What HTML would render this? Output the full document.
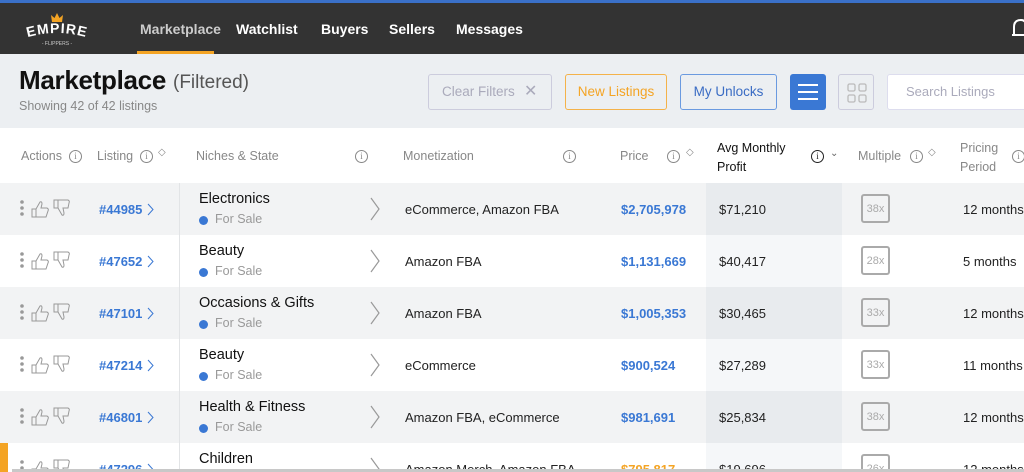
<!DOCTYPE html>
<html style="width:1024px;height:472px;overflow:hidden"><head><meta charset="utf-8"><style>
*{margin:0;padding:0;box-sizing:border-box}
body{width:1024px;height:472px;overflow:hidden;font-family:"Liberation Sans",sans-serif;background:#fff;position:relative}
.a{position:absolute;white-space:nowrap}
.nav{font-size:14px;font-weight:bold;color:#fff;top:21px}
.hd{font-size:12.5px;color:#888;}
.ic{width:13px;height:13px;border:1px solid #888;border-radius:50%;font-size:9px;line-height:11px;text-align:center;color:#888;font-family:"Liberation Serif",serif}
.btn{border:1px solid;border-radius:3px;font-size:13.5px;text-align:center;line-height:34px;height:36px;top:74px}
.row{position:absolute;left:0;width:1024px;height:52px;overflow:hidden}
.g{background:#f2f3f4}
.nm{font-size:14.5px;color:#111}
.fs{font-size:12.5px;color:#999}
.dot{width:9px;height:9px;border-radius:50%;background:#3a78d4}
.t{font-size:13px;color:#222}
.lk{font-size:13px;color:#3a78d4;font-weight:bold}
.mx{width:29px;height:29px;border:2px solid #aaa;border-radius:3px;font-size:11px;color:#aaa;display:flex;align-items:center;justify-content:center}
</style></head><body>
<div class="a" style="left:0;top:0;width:1024px;height:3px;background:#3a70c8"></div>
<div class="a" style="left:0;top:3px;width:1024px;height:51px;background:#333"></div>
<svg class="a" style="left:22px;top:11px" width="70" height="36">
<path d="M30 11 L29 4 L32.5 7 L35 2 L37.5 7 L41 4 L40 11 Z" fill="#f4a424"/>
<defs><path id="arc" d="M3 27 Q35 17 67 27"/></defs>
<text font-family="Liberation Sans" font-weight="bold" font-size="14" fill="#fff" letter-spacing="1"><textPath href="#arc" startOffset="50%" text-anchor="middle">EMPIRE</textPath></text>
<text x="35" y="34" text-anchor="middle" font-family="Liberation Sans" font-size="5" fill="#ccc">- FLIPPERS -</text>
</svg>
<div class="a nav" style="left:140px;color:#ccc">Marketplace</div>
<div class="a" style="left:137px;top:51px;width:77px;height:3px;background:#f4a424"></div>
<div class="a nav" style="left:236px">Watchlist</div>
<div class="a nav" style="left:321px">Buyers</div>
<div class="a nav" style="left:389px">Sellers</div>
<div class="a nav" style="left:456px">Messages</div>
<svg class="a" style="left:1012px;top:18px" width="14" height="20"><path d="M2 17 L2 9 Q2 2 9 2 Q14 2 14 8" stroke="#fff" stroke-width="2" fill="none"/><path d="M0 17 H14" stroke="#fff" stroke-width="2"/></svg>
<div class="a" style="left:0;top:54px;width:1024px;height:74px;background:#eceff2"></div>
<div class="a" style="left:19px;top:65px;font-size:26px;font-weight:bold;color:#111;letter-spacing:-0.3px">Marketplace</div>
<div class="a" style="left:173px;top:72px;font-size:19px;color:#555">(Filtered)</div>
<div class="a" style="left:19px;top:99px;font-size:12.5px;color:#888">Showing 42 of 42 listings</div>
<div class="a btn" style="left:428px;width:124px;border-color:#ccd;color:#aab;text-align:left;padding-left:13px">Clear Filters <span style="position:absolute;left:95px;top:0;font-size:16px;color:#aab">✕</span></div>
<div class="a btn" style="left:565px;width:102px;border-color:#f4b24a;color:#f4a424">New Listings</div>
<div class="a btn" style="left:680px;width:97px;border-color:#6a9ae0;color:#3a6cc4">My Unlocks</div>
<div class="a" style="left:790px;top:74px;width:36px;height:36px;background:#3a78d4;border-radius:3px"><div class="a" style="left:8px;top:10px;width:20px;height:2px;background:#fff;box-shadow:0 7px 0 #fff,0 14px 0 #fff"></div></div>
<div class="a" style="left:838px;top:74px;width:36px;height:36px;border:1px solid #ccd;border-radius:3px">
<svg class="a" style="left:8px;top:8px" width="20" height="20"><rect x="1" y="1" width="7" height="7" rx="1.5" fill="none" stroke="#bbb" stroke-width="1.3"/><rect x="12" y="1" width="7" height="7" rx="1.5" fill="none" stroke="#bbb" stroke-width="1.3"/><rect x="1" y="12" width="7" height="7" rx="1.5" fill="none" stroke="#bbb" stroke-width="1.3"/><rect x="12" y="12" width="7" height="7" rx="1.5" fill="none" stroke="#bbb" stroke-width="1.3"/></svg></div>
<div class="a" style="left:887px;top:74px;width:140px;height:36px;background:#fff;border:1px solid #dde;border-radius:3px;font-size:13px;color:#aab;line-height:34px;padding-left:18px">Search Listings</div>

<div class="a hd" style="left:21px;top:149px">Actions</div><div class="a ic" style="left:69px;top:150px">i</div>
<div class="a hd" style="left:97px;top:149px">Listing</div><div class="a ic" style="left:140px;top:150px">i</div><div class="a hd" style="left:158px;top:147px;font-size:10px">◇</div>
<div class="a hd" style="left:196px;top:149px">Niches &amp; State</div><div class="a ic" style="left:355px;top:150px">i</div>
<div class="a hd" style="left:403px;top:149px">Monetization</div><div class="a ic" style="left:563px;top:150px">i</div>
<div class="a hd" style="left:620px;top:149px">Price</div><div class="a ic" style="left:667px;top:150px">i</div><div class="a hd" style="left:686px;top:147px;font-size:10px">◇</div>
<div class="a" style="left:717px;top:139px;font-size:12.5px;color:#111;line-height:19px">Avg Monthly<br>Profit</div><div class="a ic" style="left:811px;top:150px;border-color:#222;color:#222">i</div><div class="a" style="left:830px;top:148px;font-size:10px;color:#666">⌄</div>
<div class="a hd" style="left:858px;top:149px">Multiple</div><div class="a ic" style="left:910px;top:150px">i</div><div class="a hd" style="left:928px;top:147px;font-size:10px">◇</div>
<div class="a hd" style="left:960px;top:139px;line-height:19px">Pricing<br>Period</div><div class="a ic" style="left:1012px;top:150px">i</div>

<div id="rows"></div>
<script>
var d=[["44985","Electronics","eCommerce, Amazon FBA","$2,705,978","$71,210","38x","12 months"],
["47652","Beauty","Amazon FBA","$1,131,669","$40,417","28x","5 months"],
["47101","Occasions &amp; Gifts","Amazon FBA","$1,005,353","$30,465","33x","12 months"],
["47214","Beauty","eCommerce","$900,524","$27,289","33x","11 months"],
["46801","Health &amp; Fitness","Amazon FBA, eCommerce","$981,691","$25,834","38x","12 months"],
["47296","Children","Amazon Merch, Amazon FBA","$795,817","$19,696","26x","12 months"]];
var h="";
d.forEach(function(r,i){var t=183+i*52,g=i%2==0;
h+='<div class="row '+(g?'g':'')+'" style="top:'+t+'px">'+
'<div class="a" style="left:706px;top:0;width:136px;height:52px;background:'+(g?'#e8ebee':'#f5f7f9')+'"></div>'+
'<div class="a" style="left:179px;top:0;width:1px;height:52px;background:#e2e4e6"></div>'+
'<svg class="a" style="left:18px;top:16px" width="58" height="20"><circle cx="4" cy="3" r="1.8" fill="#999"/><circle cx="4" cy="9" r="1.8" fill="#999"/><circle cx="4" cy="15" r="1.8" fill="#999"/>'+
'<path d="M14 10 h4 v8 h-4z M18 10 L22 3 Q24 2 24 5 L23 9 H29 Q31 10 30 12 L28 18 H18" fill="none" stroke="#999" stroke-width="1"/>'+
'<path d="M36 1 h4 v8 h-4z M40 1 H50 Q52 2 51 4 L50 9 H45 L46 14 Q46 17 44 16 L40 9" fill="none" stroke="#999" stroke-width="1"/></svg>'+
'<div class="a lk" style="left:99px;top:19px">#'+r[0]+'</div>'+
'<svg class="a" style="left:147px;top:20px" width="7" height="13"><path d="M1 1 L6 6.5 L1 12" fill="none" stroke="#3a78d4" stroke-width="1"/></svg>'+
'<div class="a nm" style="left:199px;top:8px">'+r[1]+'</div>'+
(i<5?'<div class="a dot" style="left:199px;top:33px"></div><div class="a fs" style="left:215px;top:29px">For Sale</div>':'')+
'<svg class="a" style="left:369px;top:14px" width="12" height="24"><path d="M2 1 L10 12 L2 23" fill="none" stroke="#999" stroke-width="1.2"/></svg>'+
'<div class="a t" style="left:405px;top:19px">'+r[2]+'</div>'+
'<div class="a lk" style="left:621px;top:19px;'+(i==5?'color:#f4a424':'')+'">'+r[3]+'</div>'+
'<div class="a t" style="left:719px;top:19px">'+r[4]+'</div>'+
'<div class="a mx" style="left:861px;top:11px">'+r[5]+'</div>'+
'<div class="a t" style="left:963px;top:19px">'+r[6]+'</div></div>';});
document.getElementById("rows").innerHTML=h;
</script>
<div class="a" style="left:0;top:443px;width:8px;height:29px;background:#f4a424"></div>
<div class="a" style="left:12px;top:469px;width:1012px;height:3px;background:#c8c8c8"></div>
</body></html>
